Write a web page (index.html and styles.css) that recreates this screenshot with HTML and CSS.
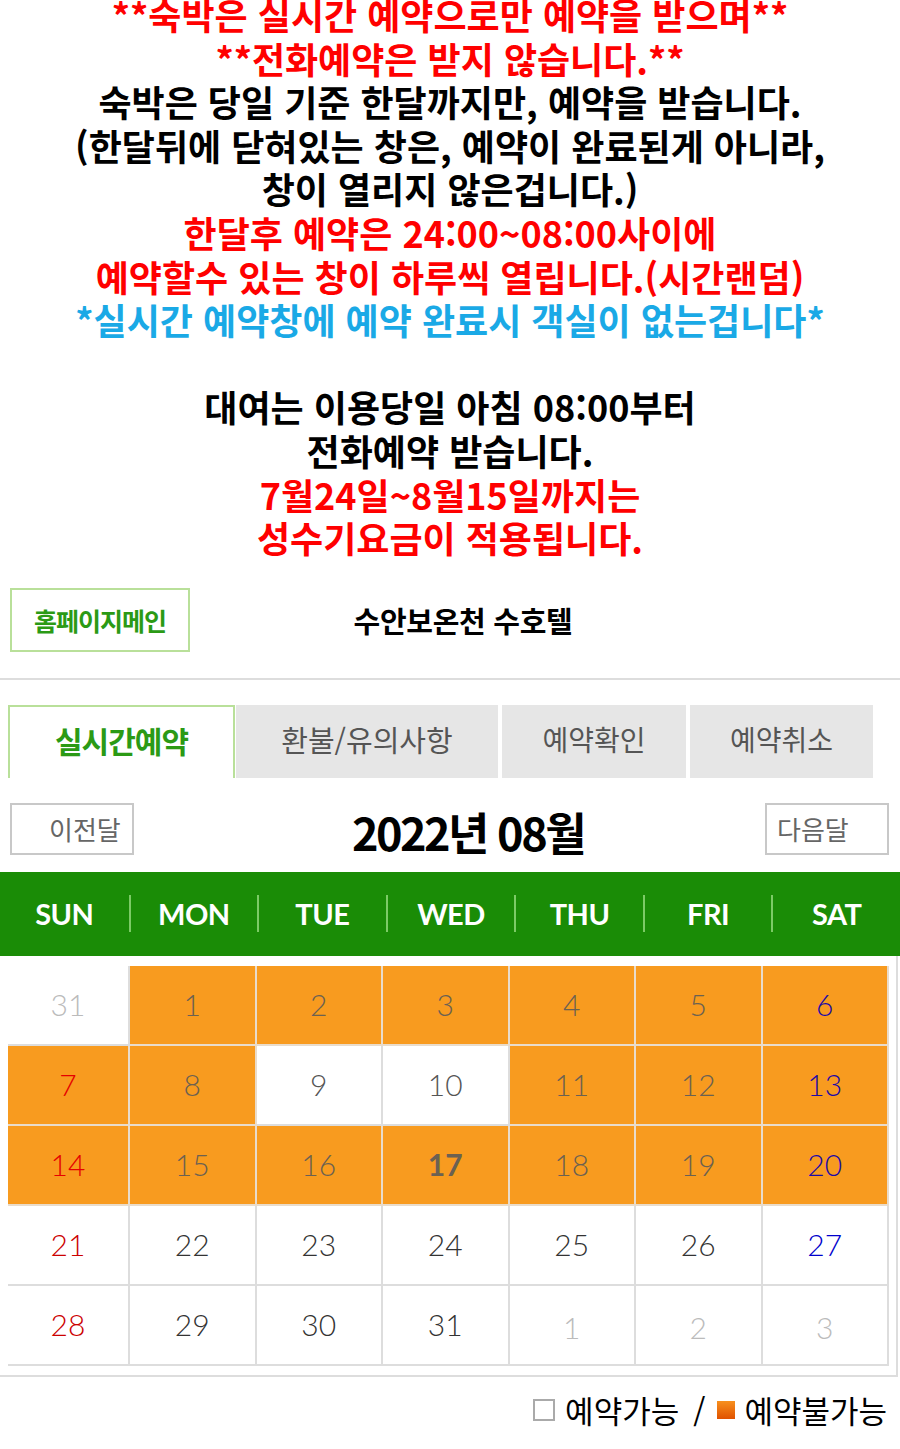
FILE: index.html
```html
<!DOCTYPE html>
<html lang="ko">
<head>
<meta charset="utf-8">
<title>수안보온천 수호텔 실시간예약</title>
<link rel="stylesheet" href="styles.css">
</head>
<body>
<div class="notice">
  <p class="red">**숙박은 실시간 예약으로만 예약을 받으며**</p>
  <p class="red">**전화예약은 받지 않습니다.**</p>
  <p>숙박은 당일 기준 한달까지만, 예약을 받습니다.</p>
  <p>(한달뒤에 닫혀있는 창은, 예약이 완료된게 아니라,</p>
  <p>창이 열리지 않은겁니다.)</p>
  <p class="red">한달후 예약은 24:00~08:00사이에</p>
  <p class="red">예약할수 있는 창이 하루씩 열립니다.(시간랜덤)</p>
  <p class="blue">*실시간 예약창에 예약 완료시 객실이 없는겁니다*</p>
  <p>&nbsp;</p>
  <p>대여는 이용당일 아침 08:00부터</p>
  <p>전화예약 받습니다.</p>
  <p class="red">7월24일~8월15일까지는</p>
  <p class="red">성수기요금이 적용됩니다.</p>
</div>

<div class="topbar">
  <a class="home-btn">홈페이지메인</a>
  <h1 class="hotel">수안보온천 수호텔</h1>
</div>
<div class="divider"></div>

<div class="tabs">
  <div class="tab active">실시간예약</div>
  <div class="tab t2">환불/유의사항</div>
  <div class="tab t3">예약확인</div>
  <div class="tab t4">예약취소</div>
</div>

<div class="month-nav">
  <a class="nav-btn prev">이전달</a>
  <div class="month-title">2022년 08월</div>
  <a class="nav-btn next">다음달</a>
</div>

<div class="week-bar">
  <div class="wd">SUN</div>
  <div class="wd sep">MON</div>
  <div class="wd sep">TUE</div>
  <div class="wd sep">WED</div>
  <div class="wd sep">THU</div>
  <div class="wd sep">FRI</div>
  <div class="wd sep">SAT</div>
</div>

<div class="cal-wrap">
  <div class="cal">
    <div class="d other">31</div>
    <div class="d full">1</div>
    <div class="d full">2</div>
    <div class="d full">3</div>
    <div class="d full">4</div>
    <div class="d full">5</div>
    <div class="d full sat">6</div>

    <div class="d full sun">7</div>
    <div class="d full">8</div>
    <div class="d open">9</div>
    <div class="d open">10</div>
    <div class="d full">11</div>
    <div class="d full">12</div>
    <div class="d full sat">13</div>

    <div class="d full sun">14</div>
    <div class="d full">15</div>
    <div class="d full">16</div>
    <div class="d full today">17</div>
    <div class="d full">18</div>
    <div class="d full">19</div>
    <div class="d full sat">20</div>

    <div class="d cur sun2">21</div>
    <div class="d cur">22</div>
    <div class="d cur">23</div>
    <div class="d cur">24</div>
    <div class="d cur">25</div>
    <div class="d cur">26</div>
    <div class="d cur sat2">27</div>

    <div class="d cur sun2">28</div>
    <div class="d cur">29</div>
    <div class="d cur">30</div>
    <div class="d cur">31</div>
    <div class="d other low">1</div>
    <div class="d other low">2</div>
    <div class="d other low">3</div>
  </div>
</div>

<div class="legend">
  <span class="box empty"></span><span class="lg-text">예약가능</span><span class="slash">/</span><span class="box filled"></span><span class="lg-text">예약불가능</span>
</div>
</body>
</html>
```

FILE: styles.css
```css
* { box-sizing: border-box; margin: 0; padding: 0; }
body {
  margin: 0;
  width: 900px;
  background: #fff;
  color: #000;
  font-family: "Noto Sans CJK KR", "Noto Sans", sans-serif;
  overflow: hidden;
}

.notice {
  margin-top: -7px;
  text-align: center;
  font-weight: 700;
  font-size: 36px;
  line-height: 43.6px;
  letter-spacing: 0;
}
.red { color: #ff0000; }
.blue { color: #1aa9e6; }

.topbar {
  display: grid;
  grid-template-columns: 180px 1fr;
  align-items: center;
  margin-top: 28px;
  padding-left: 10px;
  height: 64px;
}
.home-btn {
  height: 64px;
  border: 2px solid #b9e09a;
  display: flex;
  align-items: center;
  justify-content: center;
  color: #2b9a15;
  font-weight: 700;
  font-size: 25px;
  letter-spacing: -1px;
}
.hotel {
  font-size: 29px;
  font-weight: 700;
  text-align: center;
  padding-right: 164px;
  letter-spacing: -0.3px;
}
.divider {
  height: 2px;
  background: #dddddd;
  margin-top: 26px;
}

.tabs {
  display: flex;
  margin-top: 25px;
  padding-left: 8px;
  height: 73px;
}
.tab {
  display: flex;
  align-items: center;
  justify-content: center;
  background: #e6e6e6;
  color: #555;
  font-size: 28px;
  padding-bottom: 4px;
}
.tab.active {
  width: 227px;
  background: #fff;
  border: 2px solid #b9e09a;
  border-bottom: none;
  color: #2b9a15;
  font-weight: 700;
  font-size: 30px;
  letter-spacing: -1px;
}
.t2 { width: 262px; margin-left: 1px; font-size: 29px; }
.t3 { width: 184px; margin-left: 4px; }
.t4 { width: 183px; margin-left: 4px; }

.month-nav {
  display: grid;
  grid-template-columns: 124px 1fr 124px;
  align-items: center;
  margin-top: 22px;
  padding: 0 11px 0 10px;
  height: 52px;
}
.nav-btn {
  height: 52px;
  border: 2px solid #c8c8c8;
  display: flex;
  align-items: center;
  color: #666;
  font-size: 26px;
}
.prev { padding-left: 37px; }
.next { padding-left: 10px; }
.month-title {
  text-align: center;
  padding-left: 37px;
  padding-top: 6px;
  font-size: 45px;
  font-weight: 700;
  letter-spacing: -2.5px;
  line-height: 52px;
}

.week-bar {
  display: grid;
  grid-template-columns: repeat(7, 1fr);
  align-items: center;
  margin-top: 20px;
  height: 84px;
  background: #1a8c06;
}
.wd {
  height: 37px;
  display: flex;
  align-items: center;
  justify-content: center;
  color: #fff;
  font-family: "Lato", "Noto Sans", sans-serif;
  font-weight: 700;
  font-size: 29px;
  letter-spacing: -0.5px;
}
.wd.sep { border-left: 2px solid #7ccb66; }

.cal-wrap {
  width: 898px;
  padding: 10px 6px 9px 8px;
  border-right: 2px solid #dddddd;
  border-bottom: 2px solid #dddddd;
}
.cal {
  display: grid;
  grid-template-columns: 122px repeat(6, 126.5px);
  grid-auto-rows: 80px;
}
.d {
  display: flex;
  align-items: center;
  justify-content: center;
  border-right: 2px solid #dddddd;
  border-bottom: 2px solid #dddddd;
  font-family: "Lato", "Noto Sans", sans-serif;
  font-weight: 300;
  font-size: 30px;
  color: #666;
  background: #fff;
  padding-bottom: 2px;
}
.d.full { background: #f89b1f; border-color: #e9dccb; color: #6b6152; }
.d.open { color: #555; }
.d.cur { color: #333; }
.d.other { color: #bbbbbb; }
.d.low { padding-top: 6px; }
.d.sun { color: #e60000; }
.d.sat { color: #1d0aa6; }
.d.sun2 { color: #cc0000; }
.d.sat2 { color: #0000cc; }
.d.today { font-weight: 700; color: #6b6152; }

.legend {
  display: flex;
  justify-content: flex-end;
  align-items: center;
  margin-top: 13px;
  padding-right: 13px;
  height: 40px;
  font-size: 31px;
  line-height: 40px;
}
.box { display: inline-block; }
.box.empty {
  width: 22px;
  height: 22px;
  border: 2px solid #aaaaaa;
  margin-right: 10px;
}
.box.filled {
  width: 18px;
  height: 18px;
  background: linear-gradient(180deg, #f7901e, #e05200);
  margin-right: 9px;
}
.slash { margin: 0 12px 0 14px; }
```
